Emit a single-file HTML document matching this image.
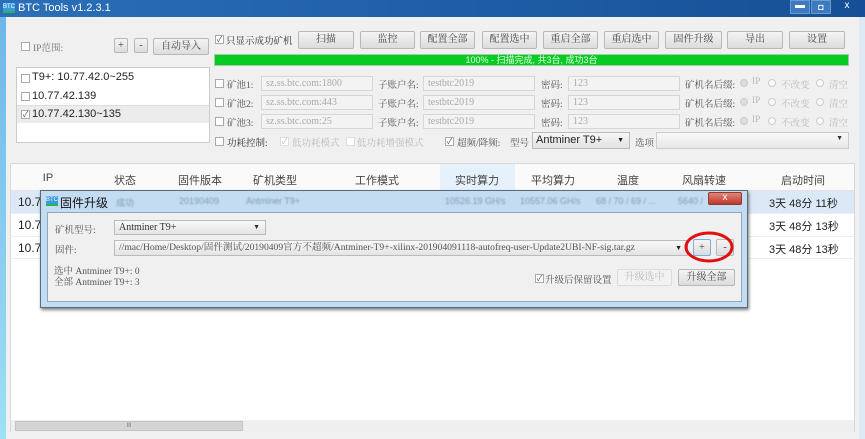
<!DOCTYPE html>
<html><head><meta charset="utf-8"><style>
*{box-sizing:border-box;margin:0;padding:0}
body{width:865px;height:439px;overflow:hidden;position:relative;background:#f0f0f0;font-family:"Liberation Sans","Noto Sans CJK SC",sans-serif;font-size:11px;color:#333}
.a{position:absolute}
.s{font-family:"Liberation Serif","Noto Serif CJK SC",serif}
.btn{position:absolute;border:1px solid #b8b8b8;border-radius:2px;background:linear-gradient(#f4f4f4,#dcdcdc);text-align:center;font-size:10px;color:#444;font-family:"Liberation Serif","Noto Serif CJK SC",serif}
.cb{position:absolute;width:9px;height:9px;border:1px solid #a9a9a9;background:#fff;font-size:8px;line-height:7px;text-align:center;color:#555}
.inp{position:absolute;border:1px solid #d6d6d6;background:#f3f3f3;color:#aaa;font-family:"Liberation Serif",serif;font-size:10px;padding-left:4px;line-height:14px;height:15px}
.lbl{position:absolute;font-family:"Liberation Serif","Noto Serif CJK SC",serif;font-size:9.5px;color:#555;white-space:nowrap}
.rd{position:absolute;width:8px;height:8px;border:1px solid #ccc;border-radius:50%;background:#fafafa}
.hd{position:absolute;top:172px;font-size:11px;color:#444;transform:translateX(-50%)}
.bl{position:absolute;top:196px;font-size:9px;color:#7a9ab5;filter:blur(.8px)}
</style></head><body>
<div class="a" style="left:0;top:0;width:865px;height:17px;background:linear-gradient(90deg,#2b6fb8,#1f5fa8 50%,#164f95)"></div>
<div class="a" style="left:3px;top:3px;width:12px;height:10px;background:#3a9ae0;border-bottom:2px solid #2bb24c;font-size:6px;color:#fff;line-height:8px;text-align:center">BTC</div>
<div class="a" style="left:18px;top:2px;color:#fff;font-size:11px">BTC Tools v1.2.3.1</div>
<div class="a" style="left:790px;top:0;width:20px;height:14px;background:#3d7ac0;border:1px solid #6c9bd2;color:#fff;text-align:center;font-size:10px;line-height:10px">▬</div>
<div class="a" style="left:811px;top:0;width:20px;height:14px;background:#3d7ac0;border:1px solid #6c9bd2;color:#fff;text-align:center;font-size:9px;line-height:12px">◘</div>
<div class="a" style="left:832px;top:0;width:30px;height:14px;color:#fff;text-align:center;font-size:10px;line-height:12px">x</div>
<div class="a" style="left:0;top:17px;width:6px;height:422px;background:linear-gradient(#6fb7ea,#9ee0f6)"></div>
<div class="a" style="left:859px;top:17px;width:6px;height:422px;background:#dfe9f3"></div>

<div class="cb" style="left:21px;top:42px"></div>
<div class="lbl" style="left:33px;top:40px;color:#777">IP范围:</div>
<div class="btn" style="left:114px;top:38px;width:14px;height:15px;line-height:13px">+</div>
<div class="btn" style="left:134px;top:38px;width:14px;height:15px;line-height:13px">-</div>
<div class="btn" style="left:153px;top:38px;width:56px;height:17px;line-height:15px">自动导入</div>
<div class="a" style="left:16px;top:67px;width:194px;height:76px;background:#fff;border:1px solid #ccc"></div>
<div class="a" style="left:17px;top:105px;width:192px;height:18px;background:#ececec;border-top:1px solid #ddd"></div>
<div class="cb" style="left:21px;top:74px"></div><div class="a" style="left:32px;top:71px;font-size:11px;color:#222">T9+: 10.77.42.0~255</div>
<div class="cb" style="left:21px;top:92px"></div><div class="a" style="left:32px;top:90px;font-size:11px;color:#222">10.77.42.139</div>
<div class="cb" style="left:21px;top:110px">✓</div><div class="a" style="left:32px;top:108px;font-size:11px;color:#222">10.77.42.130~135</div>

<div class="cb" style="left:215px;top:35px">✓</div>
<div class="lbl" style="left:226px;top:33px;color:#333">只显示成功矿机</div>
<div class="btn" style="left:298px;top:31px;width:56px;height:18px;line-height:16px">扫描</div>
<div class="btn" style="left:360px;top:31px;width:55px;height:18px;line-height:16px">监控</div>
<div class="btn" style="left:420px;top:31px;width:55px;height:18px;line-height:16px">配置全部</div>
<div class="btn" style="left:482px;top:31px;width:55px;height:18px;line-height:16px">配置选中</div>
<div class="btn" style="left:543px;top:31px;width:55px;height:18px;line-height:16px">重启全部</div>
<div class="btn" style="left:604px;top:31px;width:55px;height:18px;line-height:16px">重启选中</div>
<div class="btn" style="left:665px;top:31px;width:57px;height:18px;line-height:16px">固件升级</div>
<div class="btn" style="left:727px;top:31px;width:56px;height:18px;line-height:16px">导出</div>
<div class="btn" style="left:789px;top:31px;width:56px;height:18px;line-height:16px">设置</div>
<div class="a" style="left:214px;top:54px;width:635px;height:12px;background:#06cc22;border:1px solid #a8c8a8;text-align:center;color:#eaffea;font-size:9px;line-height:10px">100% - 扫描完成, 共3台, 成功3台</div>

<div class="cb" style="left:215px;top:79px"></div><div class="lbl" style="left:227px;top:77px">矿池1:</div><div class="inp" style="left:261px;top:76px;width:112px">sz.ss.btc.com:1800</div>
<div class="lbl" style="left:378px;top:77px">子账户名:</div><div class="inp" style="left:423px;top:76px;width:112px">testbtc2019</div>
<div class="lbl" style="left:541px;top:77px">密码:</div><div class="inp" style="left:568px;top:76px;width:112px">123</div>
<div class="lbl" style="left:685px;top:77px">矿机名后缀:</div>
<div class="cb" style="left:215px;top:98px"></div><div class="lbl" style="left:227px;top:96px">矿池2:</div><div class="inp" style="left:261px;top:95px;width:112px">sz.ss.btc.com:443</div>
<div class="lbl" style="left:378px;top:96px">子账户名:</div><div class="inp" style="left:423px;top:95px;width:112px">testbtc2019</div>
<div class="lbl" style="left:541px;top:96px">密码:</div><div class="inp" style="left:568px;top:95px;width:112px">123</div>
<div class="lbl" style="left:685px;top:96px">矿机名后缀:</div>
<div class="cb" style="left:215px;top:117px"></div><div class="lbl" style="left:227px;top:115px">矿池3:</div><div class="inp" style="left:261px;top:114px;width:112px">sz.ss.btc.com:25</div>
<div class="lbl" style="left:378px;top:115px">子账户名:</div><div class="inp" style="left:423px;top:114px;width:112px">testbtc2019</div>
<div class="lbl" style="left:541px;top:115px">密码:</div><div class="inp" style="left:568px;top:114px;width:112px">123</div>
<div class="lbl" style="left:685px;top:115px">矿机名后缀:</div>
<div class="rd" style="left:740px;top:79px;background:#ddd"></div><div class="lbl" style="left:752px;top:77px;color:#bbb">IP</div><div class="rd" style="left:768px;top:79px"></div><div class="lbl" style="left:781px;top:77px;color:#bbb">不改变</div><div class="rd" style="left:816px;top:79px"></div><div class="lbl" style="left:829px;top:77px;color:#bbb">清空</div>
<div class="rd" style="left:740px;top:98px;background:#ddd"></div><div class="lbl" style="left:752px;top:96px;color:#bbb">IP</div><div class="rd" style="left:768px;top:98px"></div><div class="lbl" style="left:781px;top:96px;color:#bbb">不改变</div><div class="rd" style="left:816px;top:98px"></div><div class="lbl" style="left:829px;top:96px;color:#bbb">清空</div>
<div class="rd" style="left:740px;top:117px;background:#ddd"></div><div class="lbl" style="left:752px;top:115px;color:#bbb">IP</div><div class="rd" style="left:768px;top:117px"></div><div class="lbl" style="left:781px;top:115px;color:#bbb">不改变</div><div class="rd" style="left:816px;top:117px"></div><div class="lbl" style="left:829px;top:115px;color:#bbb">清空</div>

<div class="cb" style="left:215px;top:137px"></div><div class="lbl" style="left:227px;top:135px;color:#333">功耗控制:</div>
<div class="cb" style="left:280px;top:137px;border-color:#ddd;color:#bbb">✓</div><div class="lbl" style="left:292px;top:135px;color:#bbb">低功耗模式</div>
<div class="cb" style="left:346px;top:137px;border-color:#ddd"></div><div class="lbl" style="left:357px;top:135px;color:#bbb">低功耗增强模式</div>
<div class="cb" style="left:445px;top:137px">✓</div><div class="lbl" style="left:457px;top:135px">超频/降频:</div>
<div class="lbl" style="left:510px;top:135px">型号</div>
<div class="a" style="left:532px;top:132px;width:98px;height:17px;border:1px solid #bbb;background:linear-gradient(#f6f6f6,#e2e2e2);font-size:11px;color:#222;padding-left:3px;line-height:15px">Antminer T9+<span style="position:absolute;right:5px;font-size:7px">▼</span></div>
<div class="lbl" style="left:635px;top:135px">选项</div>
<div class="a" style="left:656px;top:132px;width:193px;height:17px;border:1px solid #ccc;background:linear-gradient(#f8f8f8,#e8e8e8)"><span style="position:absolute;right:5px;top:2px;font-size:7px">▼</span></div>

<div class="a" style="left:10px;top:163px;width:845px;height:269px;background:#fff;border:1px solid #d8d8d8"></div>
<div class="a" style="left:11px;top:164px;width:843px;height:27px;background:#fafafa;border-bottom:1px solid #e4e4e4"></div>
<div class="a" style="left:440px;top:164px;width:75px;height:27px;background:#e6f1fb"></div>
<div class="hd" style="left:48px">IP</div><div class="hd" style="left:125px">状态</div><div class="hd" style="left:200px">固件版本</div><div class="hd" style="left:275px">矿机类型</div><div class="hd" style="left:377px">工作模式</div><div class="hd" style="left:477px">实时算力</div><div class="hd" style="left:553px">平均算力</div><div class="hd" style="left:628px">温度</div><div class="hd" style="left:704px">风扇转速</div><div class="hd" style="left:803px">启动时间</div>
<div class="a" style="left:11px;top:191px;width:843px;height:22px;background:#dbe9f7"></div>
<div class="a" style="left:11px;top:236px;width:843px;height:1px;background:#eee"></div>
<div class="a" style="left:11px;top:213px;width:843px;height:1px;background:#eee"></div>
<div class="a" style="left:11px;top:258px;width:843px;height:1px;background:#eee"></div>
<div class="a" style="left:18px;top:195px;font-size:12px;color:#222">10.7</div>
<div class="a" style="left:18px;top:218px;font-size:12px;color:#222">10.7</div>
<div class="a" style="left:18px;top:241px;font-size:12px;color:#222">10.7</div>
<div class="a" style="left:769px;top:195px;font-size:11px;color:#222">3天 48分 11秒</div>
<div class="a" style="left:769px;top:218px;font-size:11px;color:#222">3天 48分 13秒</div>
<div class="a" style="left:769px;top:241px;font-size:11px;color:#222">3天 48分 13秒</div>
<div class="a" style="left:11px;top:420px;width:843px;height:12px;background:#efefef"></div>
<div class="a" style="left:15px;top:421px;width:228px;height:10px;background:#d4d4d4;border:1px solid #c4c4c4;text-align:center;font-size:6px;line-height:8px;color:#777">III</div>

<div class="a" style="left:40px;top:190px;width:708px;height:118px;background:#c4dcf2;border:1px solid #5a6c7c;box-shadow:1px 2px 3px rgba(0,0,0,.5)"></div>
<div class="a" style="left:46px;top:196px;width:12px;height:10px;background:#3a9ae0;border-bottom:2px solid #2bb24c;font-size:6px;color:#fff;line-height:8px;text-align:center">BTC</div>
<div class="a" style="left:60px;top:194px;font-size:12px;color:#111">固件升级</div>
<div class="bl" style="left:116px">成功</div>
<div class="bl" style="left:179px">20190409</div>
<div class="bl" style="left:246px">Antminer T9+</div>
<div class="bl" style="left:445px">10526.19 GH/s</div>
<div class="bl" style="left:520px">10557.06 GH/s</div>
<div class="bl" style="left:596px">68 / 70 / 69 / ...</div>
<div class="bl" style="left:678px">5640 /</div>
<div class="a" style="left:708px;top:192px;width:34px;height:13px;background:linear-gradient(#e0847a,#c0382a);border:1px solid #8a3a30;border-radius:2px;color:#fff;text-align:center;font-size:10px;line-height:10px">x</div>
<div class="a" style="left:47px;top:212px;width:695px;height:90px;background:#f0f0f0;border:1px solid #8ea8c0"></div>
<div class="lbl" style="left:55px;top:222px">矿机型号:</div>
<div class="a s" style="left:114px;top:220px;width:152px;height:15px;border:1px solid #bbb;background:linear-gradient(#f8f8f8,#e4e4e4);font-size:10px;padding-left:4px;line-height:13px;color:#333">Antminer T9+<span style="position:absolute;right:5px;font-size:7px">▼</span></div>
<div class="lbl" style="left:55px;top:242px">固件:</div>
<div class="a s" style="left:114px;top:240px;width:574px;height:16px;border:1px solid #bbb;background:linear-gradient(#f8f8f8,#e4e4e4);font-size:9.6px;padding-left:4px;line-height:14px;color:#555;white-space:nowrap;overflow:hidden">//mac/Home/Desktop/固件测试/20190409官方不超频/Antminer-T9+-xilinx-201904091118-autofreq-user-Update2UBI-NF-sig.tar.gz<span style="position:absolute;right:5px;font-size:7px;color:#222">▼</span></div>
<div class="btn" style="left:693px;top:239px;width:18px;height:17px;line-height:15px;border-color:#7ab0e0">+</div>
<div class="btn" style="left:716px;top:239px;width:18px;height:17px;line-height:15px">-</div>
<svg class="a" style="left:683px;top:230px" width="54" height="34"><ellipse cx="26" cy="17" rx="23" ry="14" fill="none" stroke="#e01010" stroke-width="3"/></svg>
<div class="lbl" style="left:54px;top:267px;line-height:11px">选中 Antminer T9+: 0<br>全部 Antminer T9+: 3</div>
<div class="cb" style="left:535px;top:274px">✓</div><div class="lbl" style="left:545px;top:272px">升级后保留设置</div>
<div class="btn" style="left:617px;top:269px;width:55px;height:17px;line-height:15px;color:#bbb;background:#f2f2f2;border-color:#ddd">升级选中</div>
<div class="btn" style="left:678px;top:269px;width:57px;height:17px;line-height:15px">升级全部</div>
</body></html>
